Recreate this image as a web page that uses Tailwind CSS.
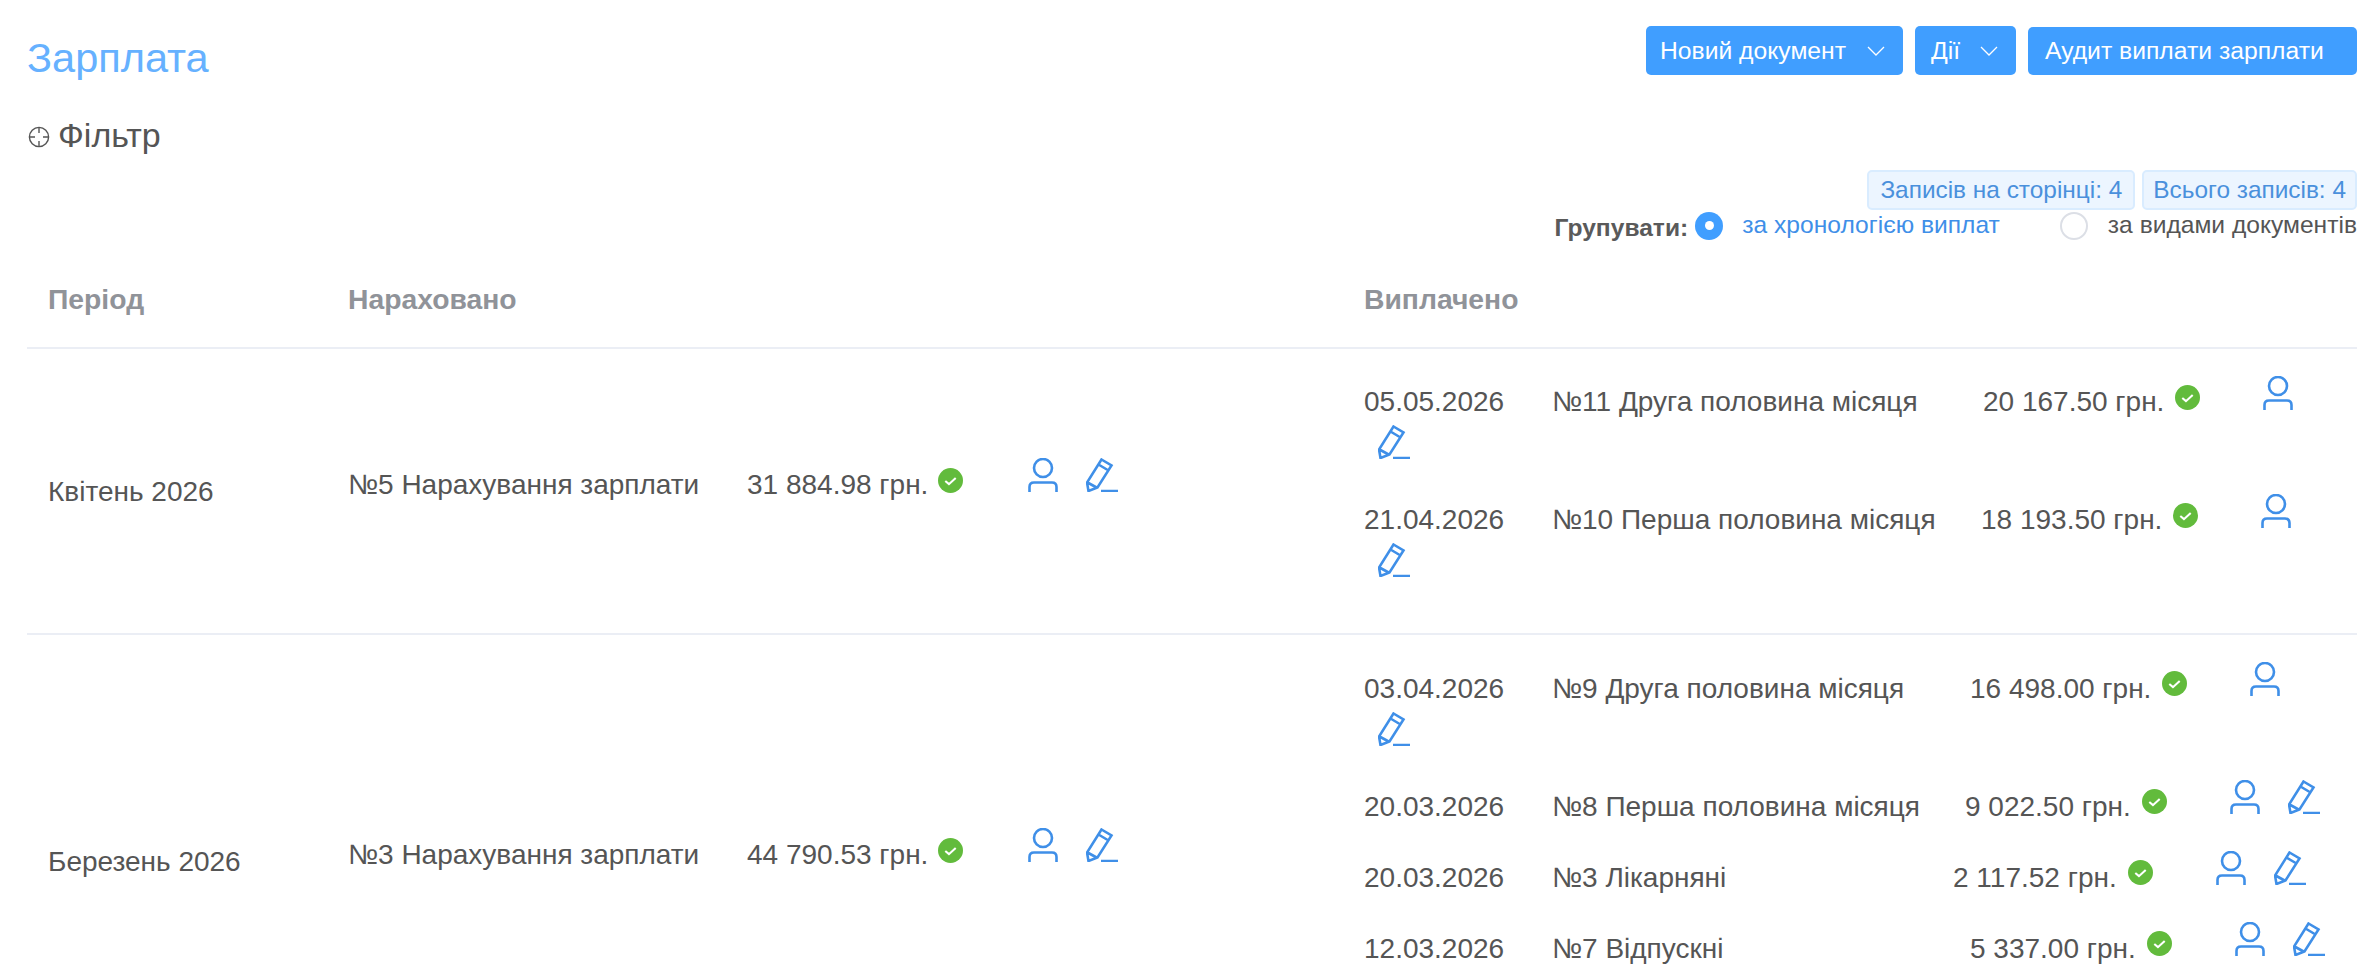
<!DOCTYPE html>
<html lang="uk">
<head>
    <meta charset="UTF-8">
    <title>Зарплата</title>
    <script src="https://cdn.jsdelivr.net/npm/@tailwindcss/browser@4"></script>
</head>
<body class="bg-white h-screen overflow-hidden font-['Liberation_Sans',Arial,sans-serif] text-[#555]">
    <svg class="hidden">
        <symbol id="person" viewBox="0 0 30 34"><circle cx="15" cy="10" r="9" fill="none" stroke="currentColor" stroke-width="2.6"/><path d="M1.5 34V29Q1.5 24.5 6 24.5H24Q28.5 24.5 28.5 29V34" fill="none" stroke="currentColor" stroke-width="2.6"/></symbol>
        <symbol id="pencil" viewBox="0 0 32 34"><path d="M15.5 1.5L25.5 7.5L11.5 29.5L2.5 33L1 24.5ZM12.5 6.5L22.5 12.5M1.5 24.5L11.5 30M15 33H32" fill="none" stroke="currentColor" stroke-width="2.6"/></symbol>
        <symbol id="ok" viewBox="0 0 24 24"><circle cx="12" cy="12" r="12" fill="#62bb3c"/><path d="M7 12.5L10.5 15.5L17 9.5" fill="none" stroke="#fff" stroke-width="2"/></symbol>
    </svg>

    <div class="px-[27px] pr-[17px]">
        <!-- Header -->
        <div class="flex justify-between items-start h-[75px] pt-[26px]">
            <h1 class="mt-[9px] text-[41.5px] leading-[46px] text-[#66b1ff]">Зарплата</h1>
            <div class="flex gap-[12px] text-white text-[24.7px]">
                <div class="flex items-center justify-between w-[257px] h-[49px] pl-[14px] pr-[18px] bg-[#409eff] rounded-[5px]">
                    Новий документ
                    <svg class="w-[18px] h-[10px]" viewBox="0 0 18 10"><path d="M1 1L9 9L17 1" fill="none" stroke="#fff" stroke-width="1.3"/></svg>
                </div>
                <div class="flex items-center justify-between w-[101px] h-[49px] pl-[16px] pr-[18px] bg-[#409eff] rounded-[5px]">
                    Дії
                    <svg class="w-[18px] h-[10px]" viewBox="0 0 18 10"><path d="M1 1L9 9L17 1" fill="none" stroke="#fff" stroke-width="1.3"/></svg>
                </div>
                <div class="flex items-center w-[329px] h-[48px] mt-px pl-[17px] bg-[#409eff] rounded-[5px]">Аудит виплати зарплати</div>
            </div>
        </div>

        <!-- Filter -->
        <div class="flex items-center gap-[8px] h-[36px] mt-[42px] text-[34px]">
            <svg class="w-[22px] h-[22px] mt-[3px] ml-px" viewBox="0 0 22 22"><circle cx="11" cy="11" r="9.6" fill="none" stroke="#555" stroke-width="1.4"/><path d="M11 1V7M11 15V21M1 11H7M15 11H21" fill="none" stroke="#555" stroke-width="1.4"/></svg>
            Фільтр
        </div>

        <!-- Counters -->
        <div class="flex justify-end gap-[7px] mt-[17px] text-[24.4px] text-[#4a90dc]">
            <span class="flex items-center h-[40px] px-[11px] bg-[#ecf5ff] border-2 border-[#d9ecff] rounded-[5px]">Записів на сторінці: 4</span>
            <span class="flex items-center h-[40px] px-[9px] bg-[#ecf5ff] border-2 border-[#d9ecff] rounded-[5px]">Всього записів: 4</span>
        </div>

        <!-- Grouping -->
        <div class="flex justify-end items-center h-[29px] mt-px text-[24.6px]">
            <b class="mt-[6px] mr-[7px] text-[#5a5a5a]">Групувати:</b>
            <span class="flex items-center justify-center w-[28px] h-[28px] rounded-full bg-[#409eff]"><span class="w-[9px] h-[9px] rounded-full bg-white"></span></span>
            <span class="ml-[19px] text-[#3f8fe8]">за хронологією виплат</span>
            <span class="w-[28px] h-[28px] ml-[60px] rounded-full border-2 border-[#dcdfe6]"></span>
            <span class="ml-[20px]">за видами документів</span>
        </div>

        <!-- Table head -->
        <div class="flex items-center h-[109px] pt-[12px] border-b-2 border-[#ebeef5] text-[28.3px] font-bold text-[#909399]">
            <span class="w-[321px] pl-[21px]">Період</span>
            <span class="w-[1016px]">Нараховано</span>
            <span>Виплачено</span>
        </div>

        <!-- Квітень -->
        <div class="flex items-center h-[286px] border-b-2 border-[#ebeef5] text-[28px]">
            <div class="w-[321px] pl-[21px] pt-[2px]">Квітень 2026</div>
            <div class="flex items-start w-[1016px] pb-[36px]">
                <span class="w-[399px] mt-[24px] leading-[24px]">№5 Нарахування зарплати</span>
                <span class="mt-[24px] leading-[24px]">31 884.98 грн.</span>
                <svg class="w-[25px] h-[25px] ml-[10px] mt-[19px]"><use href="#ok"/></svg>
                <svg class="w-[30px] h-[34px] ml-[65px] mt-[9px] text-[#3f8fe8]"><use href="#person"/></svg>
                <svg class="w-[32px] h-[34px] ml-[28px] mt-[9px] text-[#3f8fe8]"><use href="#pencil"/></svg>
            </div>
            <div class="flex-1 self-start pt-[18px]">
                <div class="flex flex-wrap items-start pb-[22px]">
                    <span class="w-[188px] mt-[22px] leading-[26px]">05.05.2026</span>
                    <span class="w-[431px] mt-[22px] leading-[26px]">№11 Друга половина місяця</span>
                    <span class="mt-[22px] leading-[26px]">20 167.50 грн.</span>
                    <svg class="w-[25px] h-[25px] ml-[11px] mt-[18px]"><use href="#ok"/></svg>
                    <svg class="w-[30px] h-[34px] ml-[63px] mr-[14px] mt-[9px] mb-[5px] text-[#3f8fe8]"><use href="#person"/></svg>
                    <svg class="w-[32px] h-[34px] ml-[14px] mr-[22px] mt-[10px] mb-[4px] text-[#3f8fe8]"><use href="#pencil"/></svg>
                </div>
                <div class="flex flex-wrap items-start pb-[22px]">
                    <span class="w-[188px] mt-[22px] leading-[26px]">21.04.2026</span>
                    <span class="w-[429px] mt-[22px] leading-[26px]">№10 Перша половина місяця</span>
                    <span class="mt-[22px] leading-[26px]">18 193.50 грн.</span>
                    <svg class="w-[25px] h-[25px] ml-[11px] mt-[18px]"><use href="#ok"/></svg>
                    <svg class="w-[30px] h-[34px] ml-[63px] mr-[14px] mt-[9px] mb-[5px] text-[#3f8fe8]"><use href="#person"/></svg>
                    <svg class="w-[32px] h-[34px] ml-[14px] mr-[22px] mt-[10px] mb-[4px] text-[#3f8fe8]"><use href="#pencil"/></svg>
                </div>
            </div>
        </div>

        <!-- Березень -->
        <div class="flex items-center h-[454px] text-[28px]">
            <div class="w-[321px] pl-[21px]">Березень 2026</div>
            <div class="flex items-start w-[1016px] pb-[39px]">
                <span class="w-[399px] mt-[24px] leading-[24px]">№3 Нарахування зарплати</span>
                <span class="mt-[24px] leading-[24px]">44 790.53 грн.</span>
                <svg class="w-[25px] h-[25px] ml-[10px] mt-[19px]"><use href="#ok"/></svg>
                <svg class="w-[30px] h-[34px] ml-[65px] mt-[9px] text-[#3f8fe8]"><use href="#person"/></svg>
                <svg class="w-[32px] h-[34px] ml-[28px] mt-[9px] text-[#3f8fe8]"><use href="#pencil"/></svg>
            </div>
            <div class="flex-1 self-start pt-[18px]">
                <div class="flex flex-wrap items-start pb-[22px]">
                    <span class="w-[188px] mt-[24px] leading-[24px]">03.04.2026</span>
                    <span class="w-[418px] mt-[24px] leading-[24px]">№9 Друга половина місяця</span>
                    <span class="mt-[24px] leading-[24px]">16 498.00 грн.</span>
                    <svg class="w-[25px] h-[25px] ml-[11px] mt-[18px]"><use href="#ok"/></svg>
                    <svg class="w-[30px] h-[34px] ml-[63px] mr-[14px] mt-[9px] mb-[5px] text-[#3f8fe8]"><use href="#person"/></svg>
                    <svg class="w-[32px] h-[34px] ml-[14px] mr-[22px] mt-[11px] mb-[3px] text-[#3f8fe8]"><use href="#pencil"/></svg>
                </div>
                <div class="flex flex-wrap items-start pb-[23px]">
                    <span class="w-[188px] mt-[23px] leading-[25px]">20.03.2026</span>
                    <span class="w-[413px] mt-[23px] leading-[25px]">№8 Перша половина місяця</span>
                    <span class="mt-[23px] leading-[25px]">9 022.50 грн.</span>
                    <svg class="w-[25px] h-[25px] ml-[11px] mt-[18px]"><use href="#ok"/></svg>
                    <svg class="w-[30px] h-[34px] ml-[63px] mr-[14px] mt-[9px] mb-[5px] text-[#3f8fe8]"><use href="#person"/></svg>
                    <svg class="w-[32px] h-[34px] ml-[14px] mr-[22px] mt-[9px] mb-[5px] text-[#3f8fe8]"><use href="#pencil"/></svg>
                </div>
                <div class="flex flex-wrap items-start pb-[23px]">
                    <span class="w-[188px] mt-[23px] leading-[25px]">20.03.2026</span>
                    <span class="w-[401px] mt-[23px] leading-[25px]">№3 Лікарняні</span>
                    <span class="mt-[23px] leading-[25px]">2 117.52 грн.</span>
                    <svg class="w-[25px] h-[25px] ml-[11px] mt-[18px]"><use href="#ok"/></svg>
                    <svg class="w-[30px] h-[34px] ml-[63px] mr-[14px] mt-[9px] mb-[5px] text-[#3f8fe8]"><use href="#person"/></svg>
                    <svg class="w-[32px] h-[34px] ml-[14px] mr-[22px] mt-[9px] mb-[5px] text-[#3f8fe8]"><use href="#pencil"/></svg>
                </div>
                <div class="flex flex-wrap items-start pb-[22px]">
                    <span class="w-[188px] mt-[24px] leading-[24px]">12.03.2026</span>
                    <span class="w-[418px] mt-[24px] leading-[24px]">№7 Відпускні</span>
                    <span class="mt-[24px] leading-[24px]">5 337.00 грн.</span>
                    <svg class="w-[25px] h-[25px] ml-[11px] mt-[18px]"><use href="#ok"/></svg>
                    <svg class="w-[30px] h-[34px] ml-[63px] mr-[14px] mt-[9px] mb-[5px] text-[#3f8fe8]"><use href="#person"/></svg>
                    <svg class="w-[32px] h-[34px] ml-[14px] mr-[22px] mt-[9px] mb-[5px] text-[#3f8fe8]"><use href="#pencil"/></svg>
                </div>
            </div>
        </div>
    </div>
</body>
</html>
